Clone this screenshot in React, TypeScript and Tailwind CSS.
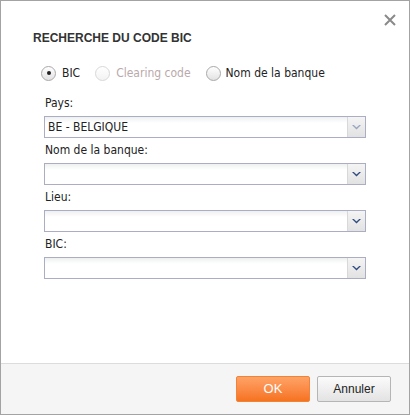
import React from "react";

function Radio({ checked, disabled }: { checked?: boolean; disabled?: boolean }) {
  return (
    <span
      className={`flex h-[15px] w-[15px] items-center justify-center rounded-full border ${
        disabled ? "border-[#d8d8d8] bg-gradient-to-b from-white to-[#f3f3f3]" : "border-[#a9a9a9] bg-gradient-to-b from-white to-[#e2e2e2]"
      }`}
    >
      {checked && <span className="h-[4px] w-[4px] rounded-full bg-[#222]" />}
    </span>
  );
}

function Select({ value, light }: { value?: string; light?: boolean }) {
  return (
    <div className="flex h-[22px] w-[322px] border border-[#abadc3] bg-gradient-to-b from-[#eef0f0] via-white via-30% to-white">
      <div className="flex flex-1 items-center pl-[3px] text-[12px] text-[#222]">{value}</div>
      <div className="flex w-[18px] items-center justify-center border-l border-[#d8d8d8] bg-gradient-to-b from-[#f4f4f4] to-[#e2e2e2]">
        <svg width="9" height="5" viewBox="0 0 9 5">
          <path d="M0 0 L4.5 4.5 L9 0 L7.2 0 L4.5 2.5 L1.8 0 Z" fill={light ? "#97a6c1" : "#2f4b80"} />
        </svg>
      </div>
    </div>
  );
}

function Field({ label, value, light }: { label: string; value?: string; light?: boolean }) {
  return (
    <div className="flex flex-col">
      <div className="h-[25px] pl-[1px] pt-[4px] text-[12px] leading-[16px] text-[#222]">{label}</div>
      <Select value={value} light={light} />
    </div>
  );
}

export default function App() {
  return (
    <div
      className="flex h-[415px] w-[410px] flex-col border border-[#a3a3a3] bg-white"
      style={{ fontFamily: "'DejaVu Sans Condensed', 'Liberation Sans', sans-serif" }}
    >
      <div className="relative flex-1">
        <button className="absolute right-[13px] top-[13px]">
          <svg width="12" height="12" viewBox="0 0 12 12">
            <path d="M1 1 L11 11 M11 1 L1 11" stroke="#8a8a8a" strokeWidth="2" />
          </svg>
        </button>
        <h1
          className="pl-[32px] pt-[29px] text-[12px] font-bold leading-[16px] text-[#333]"
          style={{ fontFamily: "'Liberation Sans', Arial, sans-serif" }}
        >
          RECHERCHE DU CODE BIC
        </h1>
        <div className="mt-[19px] flex items-center pl-[40px] text-[12px] leading-[16px]">
          <Radio checked />
          <span className="ml-[6px] text-[#222]">BIC</span>
          <span className="ml-[15px]">
            <Radio disabled />
          </span>
          <span className="ml-[6px] text-[#b9a9ab]">Clearing code</span>
          <span className="ml-[15px]">
            <Radio />
          </span>
          <span className="ml-[5px] text-[#222]">Nom de la banque</span>
        </div>
        <div className="mt-[10px] flex flex-col pl-[43px]">
          <Field label="Pays:" value="BE - BELGIQUE" light />
          <Field label="Nom de la banque:" />
          <Field label="Lieu:" />
          <Field label="BIC:" />
        </div>
      </div>
      <div
        className="flex h-[51px] items-center justify-end gap-[7px] border-t border-[#dcdcdc] bg-[#f5f5f5] pr-[18px]"
        style={{ fontFamily: "'Liberation Sans', Arial, sans-serif" }}
      >
        <button className="h-[26px] w-[74px] rounded-[2px] border border-[#f0823a] bg-gradient-to-b from-[#ffa266] to-[#f5731c] text-[13px] text-white">
          OK
        </button>
        <button className="h-[26px] w-[74px] rounded-[2px] border border-[#b5b5b5] bg-gradient-to-b from-[#fbfbfb] to-[#e3e3e3] text-[12px] text-[#222]">
          Annuler
        </button>
      </div>
    </div>
  );
}
